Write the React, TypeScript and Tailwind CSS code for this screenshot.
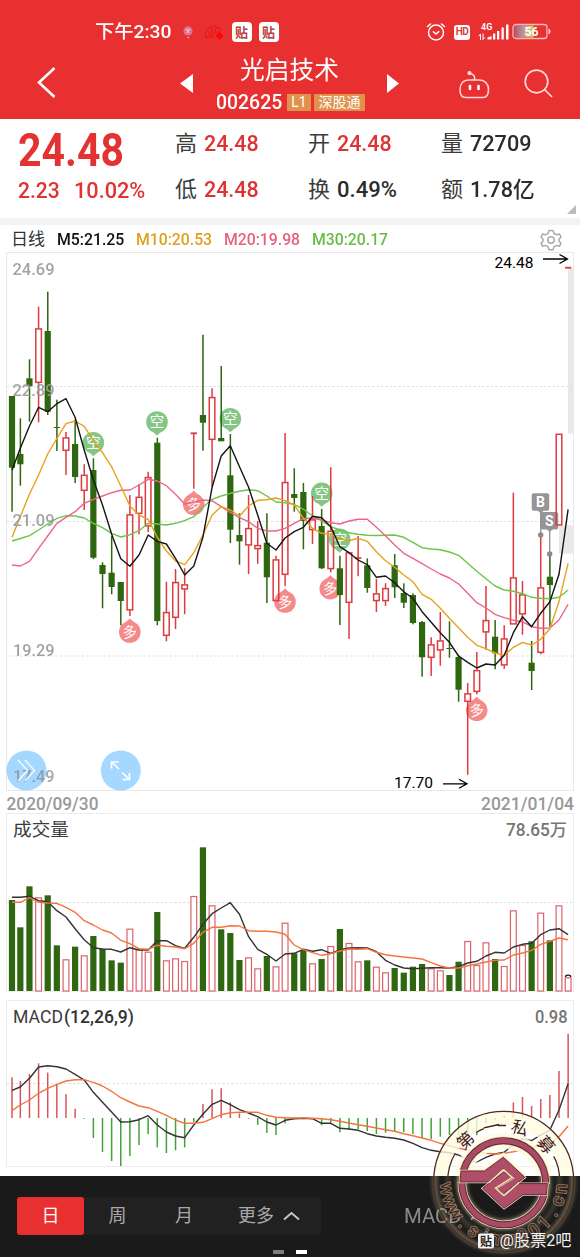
import React, { useLayoutEffect, useRef, useState } from 'react';

const CJK = "font-['Roboto','Noto_Sans_CJK_SC',sans-serif]";
const RED = '#dd3b3f';
const GREEN = '#2f6610';

/* one row per day: up/down, body top, body bottom, high, low */
type Candle = [string, number, number, number, number];

const candles: Candle[] = [
  ['d', 396, 467.7, 396, 511.7], ['d', 454, 464.3, 418.3, 485.7], ['d', 378.3, 386.3, 359.3, 421.7],
  ['u', 328.3, 382.7, 306.7, 422.3], ['d', 331, 411.7, 291.7, 415], ['d', 427, 428, 399.7, 451],
  ['u', 437.3, 450.7, 432, 475], ['d', 444, 477, 419.3, 483], ['u', 474.7, 490.7, 464.3, 510],
  ['d', 470, 557.7, 458.3, 559], ['d', 565, 574, 562.3, 608.3], ['d', 572.7, 587, 536, 594.3],
  ['d', 582, 601, 582, 625.3], ['u', 514.3, 610.3, 495, 616], ['u', 496.7, 513.7, 484, 534.3],
  ['u', 477, 526.3, 471.7, 532], ['d', 442.7, 621, 437.7, 625.3], ['u', 612, 635.7, 581.7, 641.3],
  ['u', 582, 617.7, 569, 629], ['u', 584.3, 589.3, 568.3, 614.3], ['u', 433.3, 433.3, 433.3, 488.7],
  ['d', 415, 422.7, 334.7, 450.7], ['u', 397, 439.7, 388.3, 487], ['d', 438, 441.3, 366, 441],
  ['d', 475.3, 529.7, 434, 543], ['d', 535, 541.3, 513.3, 564.7], ['u', 528, 545.3, 495, 574],
  ['u', 545, 549, 521, 563.7], ['d', 542.7, 577.3, 513.3, 603], ['u', 559.3, 601, 555.7, 601],
  ['u', 482, 574.7, 433, 586], ['d', 494, 498, 468.3, 511.7], ['d', 492, 521, 483, 549.3],
  ['u', 519.3, 530, 496, 544], ['d', 526, 568.3, 509, 569], ['u', 530.7, 569, 467.3, 572.3],
  ['d', 568.3, 595, 555.7, 625], ['u', 552.3, 602.7, 552.3, 639], ['u', 558, 558, 536, 576.3],
  ['d', 565.3, 588, 558.3, 592.7], ['u', 593.3, 601, 578.7, 612], ['u', 588, 601, 583.3, 606],
  ['d', 565.3, 587.3, 554, 598], ['d', 593, 602.7, 583.3, 608], ['d', 595, 623, 593.3, 624.3],
  ['d', 622, 657.3, 621, 676.7], ['u', 644.3, 657.7, 637.3, 676], ['u', 640.3, 650.3, 612, 665.7],
  ['d', 648, 649, 621.3, 657.7], ['d', 657, 689.7, 655, 701.7], ['u', 693.3, 701.7, 683, 774.7],
  ['u', 670, 691.7, 652, 694.3], ['u', 620, 632.3, 586, 650], ['d', 636.7, 653.3, 620, 669.3],
  ['u', 638.3, 665.3, 625.3, 668.7], ['u', 577.3, 624.3, 492.7, 624.3], ['u', 594.3, 614.3, 581, 634.7],
  ['d', 662.7, 671, 641, 690], ['u', 587.3, 652.7, 534.7, 654.3], ['d', 576.7, 585, 554, 626.7],
  ['u', 433.7, 525.3, 433.7, 525.3], ['u', 267.7, 267.7, 267.7, 267.7],
];

const ma5 = [470.3, 448.3, 426, 407.3, 411.7, 403.7, 398.7, 417.3, 450, 480, 505, 534, 558.7, 566.3, 555, 535, 541.3, 544, 558.3, 575, 566, 537.3, 487.3, 456, 445.7, 466.7, 487.3, 515, 543.3, 550, 538, 531.7, 527.3, 516.3, 517.7, 526.7, 546.7, 552.7, 560, 564.7, 577.3, 576, 582.7, 591.7, 598.3, 611.7, 622.3, 632.7, 642.3, 656, 662.3, 668, 664, 665, 655.3, 632.7, 616.7, 626.7, 613.3, 601.7, 574.3, 509.3];
const ma10 = [537.3, 516.7, 494, 475, 454, 438.3, 423.7, 421, 426.3, 440.7, 452.7, 466.7, 486, 506, 515, 519.3, 537.3, 551, 561, 564.7, 552.7, 535, 515, 506.7, 510, 516, 506, 500.3, 499.7, 498, 500.7, 505, 518.3, 528.3, 533.3, 534.3, 538.7, 540.7, 538.3, 541.3, 551.7, 560.7, 567.3, 575, 581.7, 594.3, 599.3, 608.3, 618.3, 627.7, 637.3, 645.3, 648.7, 653, 655.3, 647.3, 642.3, 645, 639.3, 628.7, 601.7, 563.3];
const ma20 = [565, 566, 561.3, 548.3, 536, 523.3, 517.3, 511.7, 503.3, 499.3, 496, 492.7, 490.3, 490, 485, 479.3, 481, 485.7, 494.3, 504, 502.3, 500, 500.7, 506.7, 512.3, 517.7, 521.7, 528.3, 531, 531, 528.3, 523.3, 518.7, 518, 520, 522.7, 524, 521, 519.3, 519.3, 527.3, 535.7, 545, 553.3, 558.3, 563.7, 569, 574, 578, 584, 593.3, 602.7, 608, 614.3, 617.7, 620.3, 621.7, 626.7, 628.3, 628, 620, 604.3];
const ma30 = [541, 538.5, 535.7, 530, 524, 518.3, 515.7, 516, 518, 523.3, 527.7, 533.3, 537, 534.7, 530.7, 523.3, 524, 525, 523.3, 520.7, 516.7, 507.3, 499.3, 496, 493.3, 491.3, 489.7, 490.7, 496, 502, 502.7, 504.3, 509.3, 515.7, 520.7, 526.7, 530, 532.7, 534.3, 535.3, 535.5, 535.3, 535, 537.3, 542.3, 547.7, 549, 549.7, 552, 555.3, 563.3, 571.3, 578.7, 586, 590, 591.3, 593.7, 597.3, 598.3, 598.7, 597.3, 590];

/* lower panels are kept in thirds of a pixel, counted from y = 815 */
const vol = [255, 337, 214, 247, 241, 391, 433, 395, 421, 363, 402, 436, 443, 341, 403, 410, 291, 436, 430, 438, 243, 97, 271, 343, 354, 435, 427, 460, 423, 454, 323, 415, 405, 445, 432, 393, 342, 384, 439, 436, 455, 472, 459, 473, 455, 447, 460, 466, 480, 440, 378, 450, 382, 432, 453, 286, 390, 379, 293, 376, 271, 487];
const vol5 = [247, 247, 244, 257, 260, 287, 306, 341, 374, 398, 402, 403, 411, 398, 405, 405, 377, 377, 392, 400, 367, 328, 296, 279, 263, 298, 365, 403, 418, 438, 417, 415, 403, 409, 404, 415, 405, 399, 398, 399, 410, 436, 450, 459, 461, 460, 458, 458, 459, 455, 444, 439, 423, 412, 414, 396, 388, 385, 359, 345, 341, 359];
const vol10 = [262, 262, 248, 262, 264, 265, 277, 292, 317, 330, 345, 354, 376, 386, 401, 403, 391, 394, 396, 401, 385, 352, 337, 337, 332, 333, 347, 349, 349, 351, 358, 390, 404, 413, 421, 416, 408, 402, 403, 401, 412, 419, 423, 426, 429, 432, 443, 453, 459, 459, 452, 447, 441, 436, 435, 420, 414, 406, 388, 379, 369, 374];
const hist = [787, 798, 777, 745, 773, 807, 838, 881, 911, 969, 1011, 1038, 1053, 1023, 990, 957, 997, 1014, 1006, 997, 921, 867, 823, 820, 862, 895, 911, 930, 954, 960, 925, 912, 911, 909, 931, 923, 952, 945, 942, 948, 957, 953, 948, 951, 957, 970, 972, 965, 960, 960, 965, 961, 924, 915, 900, 862, 846, 873, 852, 840, 768, 656];
const dif = [826, 816, 790, 756, 752, 755, 762, 778, 795, 832, 862, 891, 921, 920, 914, 902, 930, 951, 963, 968, 930, 898, 868, 856, 869, 884, 894, 905, 921, 930, 916, 911, 910, 911, 925, 925, 940, 942, 946, 956, 963, 967, 970, 975, 985, 998, 1006, 1010, 1013, 1020, 1034, 1041, 1027, 1017, 1012, 988, 971, 977, 960, 945, 885, 806];
const dea = [887, 870, 855, 835, 820, 808, 798, 794, 794, 802, 813, 829, 848, 861, 873, 878, 889, 901, 915, 925, 925, 922, 911, 899, 893, 892, 892, 892, 901, 907, 908, 909, 909, 910, 911, 914, 919, 924, 929, 934, 939, 944, 949, 956, 962, 969, 976, 985, 992, 999, 1006, 1011, 1015, 1017, 1015, 1010, 1004, 998, 990, 985, 965, 933];

const px = (i: number) => (i === 0 ? 12 : 11.2 + 9.13 * i);
const sub = (v: number) => 815 + v / 3;
const pts = (ys: number[]) => ys.map((y, i) => `${px(i).toFixed(1)},${y.toFixed(1)}`).join(' ');

/* squeezes a label into a fixed width, the digits are a narrow DIN cut */
const Fit: React.FC<{ w: number; className?: string; children: React.ReactNode }> = ({ w, className = '', children }) => {
  const ref = useRef<HTMLSpanElement>(null);
  const [k, setK] = useState(1);
  useLayoutEffect(() => { if (ref.current) setK(w / ref.current.offsetWidth); }, [w]);
  return (
    <span className={`inline-block ${className}`} style={{ width: w }}>
      <span ref={ref} className="inline-block origin-left whitespace-nowrap" style={{ transform: `scaleX(${k})` }}>{children}</span>
    </span>
  );
};

const Line: React.FC<{ ys: number[]; color: string }> = ({ ys, color }) => (
  <polyline points={pts(ys)} fill="none" stroke={color} strokeWidth="1.4" strokeLinejoin="round" />
);

const Txt: React.FC<{ x: number; y: number; w: number; size: number; fill?: string; weight?: number; children: string }> =
  ({ x, y, w, size, fill = '#999', weight = 500, children }) => (
    <text x={x} y={y} textLength={w} lengthAdjust="spacingAndGlyphs" fontSize={size} fill={fill} fontWeight={weight}>{children}</text>
  );

const Tie: React.FC = () => (
  <span className="flex size-5 items-center justify-center rounded-[4px] bg-white text-[13px] font-bold leading-none text-[#b9403c]">贴</span>
);

const Header: React.FC = () => (
  <header className="flex h-[119px] flex-col bg-[#e83030] text-white">
    <div className="flex h-[44px] items-center pl-[95px] pr-[26px] pt-5">
      <Fit w={76} className="text-[18px] font-medium leading-6">下午2:30</Fit>
      <svg className="ml-[11px]" width="12" height="14" viewBox="0 0 12 14">
        <circle cx="6" cy="6" r="4.7" fill="#dc6a8c" />
        <path d="M3 5h6M4 3.5l4 5M8 3.5l-4 5M6 2.5v6" stroke="#f7c3d3" strokeWidth=".7" />
        <circle cx="6.3" cy="12.6" r=".7" fill="#fff" />
      </svg>
      <svg className="ml-[11px]" width="19" height="17" viewBox="0 0 19 17">
        <path d="M1 13C-.5 10 .5 7 2.500 6.500 2.500 4 5 2.500 6.500 3.500c1.500-2 4-1.500 5 0 2-.8 4 .8 4 2.500M1 13h4.500l4-1.500M5.500 12.500L3 7M7.500 11L6.500 4.500M9.500 10l1.500-6M11 9.500l4-3.500" fill="none" stroke="#f20d12" strokeWidth="1" />
        <path d="M14.500 7c0 2-3.400 3-3.400 5.300 0 1.600 1.900 1.900 2.800 1.200l-.7 1.700h3l-.8-1.700c1 .7 2.700.4 2.700-1.200 0-2.300-3.600-3.300-3.600-5.300z" fill="#fb0508" />
      </svg>
      <span className="ml-[7.500px] flex gap-[7px]"><Tie /><Tie /></span>
      <div className="ml-auto flex items-center">
        <svg width="20" height="20" viewBox="0 0 20 20" fill="none" stroke="#fff" strokeWidth="1.5" strokeLinecap="round">
          <circle cx="10" cy="10.500" r="7.500" />
          <path d="M1.500 4.500l3-2.500M18.500 4.500l-3-2.500M7.300 9.800l2.600 2.200 2.800-2.400" />
        </svg>
        <span className="ml-[8px] flex h-[15px] w-[16px] items-center justify-center rounded-[3px] bg-white text-[10px] font-bold leading-none tracking-[-0.5px] text-[#d8403e]">HD</span>
        <svg className="ml-[8px]" width="34" height="20" viewBox="0 0 34 20">
          <text x="3" y="8" fontSize="9" fontWeight="600" fill="#fff">4G</text>
          <path d="M2.500 18v-6l-1.500 2M5 11.500v6l1.500-2" fill="none" stroke="#fff" />
          <path d="M9.500 17.500v-2l4-1.500v3.500zM15 17.500v-6h2.300v6zM19 17.500v-8.500h2.300v8.500zM23.500 17.500v-12h2.300v12zM28 17.500V2.500h2.500v15z" fill="#fff" />
        </svg>
        <svg width="42" height="18" viewBox="0 0 42 18">
          <defs>
            <linearGradient id="charge">
              <stop offset="0" stopColor="#a55a72" /><stop offset=".6" stopColor="#c9a79c" /><stop offset="1" stopColor="#c6d94a" />
            </linearGradient>
          </defs>
          <rect x="2.500" y="2.500" width="19" height="12" fill="url(#charge)" />
          <rect x="1" y="1.500" width="34" height="14" rx="3" fill="none" stroke="#f6b9b6" strokeWidth="1.300" />
          <path d="M37 6q2.500 2.500 0 5z" fill="#f6c9c6" stroke="#f6c9c6" />
          <text x="12.500" y="13" fontSize="12.500" fontWeight="700" fill="#fff" textLength="14" lengthAdjust="spacingAndGlyphs">56</text>
        </svg>
      </div>
    </div>
    <div className="flex h-[75px]">
      <svg className="ml-[36px] mt-[22px]" width="20" height="32" viewBox="0 0 20 32" fill="none" stroke="#fff" strokeWidth="2.600">
        <path d="M18.500 2L3 16.500 18.500 31" />
      </svg>
      <svg className="ml-[124px] mt-[30px]" width="13" height="19" viewBox="0 0 13 19"><path d="M13 0v19L0 9.500z" fill="#fff" /></svg>
      <div className="ml-[22px] flex w-[150px] flex-col">
        <Fit w={99} className="ml-[25px] mt-[9px] text-[25px] leading-[36px]">光启技术</Fit>
        <div className="mt-[4px] flex h-[18px] items-center">
          <Fit w={66} className="ml-px text-[20px] font-medium leading-none">002625</Fit>
          <span className="ml-[5px] w-[24px] bg-[#e0914c] text-center text-[14px] leading-[17px]">L1</span>
          <span className="ml-[3px] w-[51px] bg-[#e0914c] text-center text-[14px] leading-[17px]">深股通</span>
        </div>
      </div>
      <svg className="ml-[22px] mt-[30px]" width="12" height="19" viewBox="0 0 12 19"><path d="M0 0v19L12 9.500z" fill="#fff" /></svg>
      <svg className="ml-[59px] mt-[26px]" width="32" height="30" viewBox="0 0 32 30" fill="none" stroke="#ffd9d7" strokeWidth="1.600">
        <path d="M11 10h10c6 0 9.500 4 9.500 9.500 0 6-2 8-5.500 8H7.500c-3.500 0-5.500-2-5.500-8C2 14 5 10 11 10zM16.500 10c1-4-1-6-5-6.500" />
        <circle cx="11.500" cy="3.200" r="1.300" fill="#fff" />
        <path d="M12 16v3M20.500 16v3" stroke="#fff" strokeWidth="2.600" strokeLinecap="round" />
      </svg>
      <svg className="ml-[34px] mt-[25px]" width="30" height="30" viewBox="0 0 30 30" fill="none" stroke="#ffd9d7" strokeWidth="1.700">
        <circle cx="12.500" cy="12.500" r="11.300" /><path d="M20.500 20.500l7.500 7.500" />
      </svg>
    </div>
  </header>
);

const Cell: React.FC<{ label: string; value: string; w: number; gap?: string; red?: boolean }> = ({ label, value, w, gap = 'ml-[7px]', red }) => (
  <div className="flex h-[46px] items-center text-[22px]">
    <span className="text-[#3c3c3c]">{label}</span>
    <Fit w={w} className={`${gap} font-medium ${red ? 'text-[#dc3434]' : 'text-[#2b2b2b]'}`}>{value}</Fit>
  </div>
);

const Quote: React.FC = () => (
  <section className="relative flex h-[99px] bg-white leading-none">
    <div className="w-[175px] pl-[18px] text-[#e23232]">
      <Fit w={106} className="mt-[10px] text-[46px] font-bold leading-[42px]">24.48</Fit>
      <div className="mt-[9px] flex text-[22px] font-medium">
        <Fit w={42}>2.23</Fit>
        <Fit w={71} className="ml-[14px]">10.02%</Fit>
      </div>
    </div>
    <div className="w-[133px] pt-[2px]">
      <Cell label="高" value="24.48" w={54.5} red />
      <Cell label="低" value="24.48" w={54.5} red />
    </div>
    <div className="w-[133px] pt-[2px]">
      <Cell label="开" value="24.48" w={54.5} red />
      <Cell label="换" value="0.49%" w={60} />
    </div>
    <div className="pt-[2px]">
      <Cell label="量" value="72709" w={62} />
      <Cell label="额" value="1.78亿" w={65} />
    </div>
    <svg className="absolute bottom-[4px] right-[4px]" width="9" height="9" viewBox="0 0 9 9"><path d="M9 0v9H0z" fill="#bcbcbc" /></svg>
  </section>
);

const Legend: React.FC = () => (
  <div className="flex h-[27px] items-center pl-[11px] pt-[2px] text-[17px] leading-none">
    <Fit w={34} className="text-[#333]">日线</Fit>
    <Fit w={67} className="ml-[12px] font-medium text-[#111]">M5:21.25</Fit>
    <Fit w={76} className="ml-[12px] font-medium text-[#dfa01f]">M10:20.53</Fit>
    <Fit w={76} className="ml-[12px] font-medium text-[#e9607f]">M20:19.98</Fit>
    <Fit w={76} className="ml-[12px] font-medium text-[#68bd45]">M30:20.17</Fit>
    <svg className="ml-[152px]" width="22" height="22" viewBox="0 0 22 22" fill="none" stroke="#a9a9a9" strokeWidth="1.500" strokeLinejoin="round">
      <path d="M9 1.500h4l1 3 2.500 1.300 3-.8 1.500 3-2 2.200v1.800l2 2.200-1.500 3-3-.8L14 17.700l-1 3H9l-1-3-2.500-1.300-3 .8L1 14.200 3 12v-1.800L1 8l1.500-3 3 .8L8 4.500z" />
      <circle cx="11" cy="11" r="3.200" />
    </svg>
  </div>
);

const Pin: React.FC<{ x: number; y: number; short?: boolean }> = ({ x, y, short }) => (
  <g>
    <circle cx={x} cy={y} r="10.800" fill={short ? '#84c683' : '#f58a8a'} />
    <path d={short ? `M${x - 5} ${y + 9}L${x} ${y + 13.5}L${x + 5} ${y + 9}z` : `M${x - 5} ${y - 9}L${x} ${y - 13.5}L${x + 5} ${y - 9}z`} fill={short ? '#84c683' : '#f58a8a'} />
    <text x={x} y={y + 5.2} fontSize="14.500" textAnchor="middle" fill="#fff" transform={short ? undefined : `rotate(-8 ${x} ${y})`}>{short ? '空' : '多'}</text>
  </g>
);

const Grid: React.FC<{ ys: number[] }> = ({ ys }) => (
  <>{ys.map(y => <path key={y} d={`M7 ${y}H574`} stroke="#dcdcdc" strokeDasharray="2.200 2.200" />)}</>
);

const KChart: React.FC = () => (
  <svg className="block" width="580" height="561" viewBox="0 252 580 561">
    <rect x="6.500" y="252.500" width="567" height="538" fill="none" stroke="#e9e9e9" />
    <rect x="568" y="268" width="5.500" height="165.700" fill="#e8e8e8" />
    <rect x="559" y="525.300" width="14.500" height="28.400" fill="#e8e8e8" />
    <Grid ys={[386.5, 521.5, 656]} />
    <Pin short x={93.3} y={442.7} /><Pin short x={157} y={422} /><Pin short x={230.3} y={418.7} />
    <Pin short x={321.7} y={493.3} /><Pin short x={339.7} y={539.3} />
    <Pin x={129.8} y={632} /><Pin x={193.7} y={504.3} /><Pin x={285} y={602} />
    <Pin x={330.3} y={588.7} /><Pin x={476.7} y={710.3} />

    {/* trade flags */}
    <path d="M540.700 510v25M549.700 528v26" stroke="#8f8f8f" strokeWidth="1.300" />
    <rect x="540.700" y="512" width="17.500" height="17.500" rx="2" fill="#959595" />
    <rect x="531.700" y="493.300" width="17.500" height="17.500" rx="2" fill="#959595" />
    <path d="M537.500 510.500h6.400l-3.200 3zM546.500 529h6.400l-3.200 3z" fill="#959595" />
    <g fontSize="14" fontWeight="700" fill="#fff" textAnchor="middle">
      <text x="540.500" y="507">B</text><text x="549.300" y="526">S</text>
    </g>

    {candles.map(([t, a, b, hi, lo], i) => {
      const x = px(i);
      if (t === 'd') return (
        <g key={i} fill={GREEN}>
          <rect x={x - 0.7} y={hi} width="1.500" height={lo - hi} />
          <rect x={x - 3.1} y={a} width="6.200" height={b - a} />
        </g>
      );
      return (
        <g key={i} fill="none" stroke={RED} strokeWidth="1.500">
          <path d={`M${x} ${hi}V${a}M${x} ${b}V${lo}`} />
          {a === b ? <path d={`M${x - 3.200} ${a}H${x + 3.200}`} strokeWidth="1.800" />
            : <rect x={x - 2.8} y={a + 0.6} width="5.600" height={b - a - 1} />}
        </g>
      );
    })}
    <circle cx="540.700" cy="535" r="2.700" fill="#8a8a8a" /><circle cx="549.700" cy="554" r="2.700" fill="#8a8a8a" />

    <Line ys={ma30} color="#6cc44b" />
    <Line ys={ma20} color="#ec6685" />
    <Line ys={ma10} color="#e5a31c" />
    <Line ys={ma5} color="#151515" />

    {/* scroll and expand buttons */}
    <circle cx="26.500" cy="770.500" r="20" fill="#69beff" opacity=".6" />
    <circle cx="120.800" cy="770.500" r="20" fill="#69beff" opacity=".6" />

    <g opacity=".9">
      <Txt x={12.5} y={274.5} w={42} size={17}>24.69</Txt>
      <Txt x={12.5} y={395.5} w={42} size={17}>22.89</Txt>
      <Txt x={12.5} y={526} w={42} size={17}>21.09</Txt>
      <Txt x={13} y={656} w={41.5} size={17}>19.29</Txt>
    </g>
    <g opacity=".8"><Txt x={13} y={782} w={41.5} size={17} fill="#8a9297">17.49</Txt></g>
    <path d="M18 760l9.500 10.500L18 781M25 760l9.500 10.500L25 781" fill="none" stroke="#fff" strokeWidth="1.200" />
    <path d="M111.500 768.500v-6.500h7M112 762.500l7 6.500M129.500 773v6.500h-7M129 779l-7-6.500" fill="none" stroke="#fff" strokeWidth="1.700" />

    <Txt x={6.5} y={810.3} w={92} size={17.5}>2020/09/30</Txt>
    <Txt x={481} y={810.3} w={93} size={17.5}>2021/01/04</Txt>
    <Txt x={494.5} y={267.8} w={39} size={14.5} weight={400} fill="#000">24.48</Txt>
    <Txt x={394} y={787.8} w={39} size={14.5} weight={400} fill="#000">17.70</Txt>
    <path d="M543 259h24M559.500 254.500l8 4.500-8 4.500M443 783.800h24M459 779.300l8 4.500-8 4.500" fill="none" stroke="#000" strokeWidth="1.300" />
  </svg>
);

const Volume: React.FC = () => (
  <svg className="block" width="580" height="187" viewBox="0 813 580 187">
    <rect x="6.500" y="813.500" width="567" height="178" fill="none" stroke="#ececec" />
    <Grid ys={[902.5]} />
    <Txt x={13} y={836} w={56} size={18.5} weight={400} fill="#3c3c3c">成交量</Txt>
    <Txt x={506} y={836} w={61} size={17.5} fill="#757575">78.65万</Txt>
    {vol.map((v, i) => candles[i][0] === 'd'
      ? <rect key={i} x={px(i) - 3.1} y={sub(v)} width="6.200" height={991 - sub(v)} fill={GREEN} />
      : <rect key={i} x={px(i) - 2.9} y={sub(v) + 0.5} width="5.800" height={990.5 - sub(v)} fill="#fff" stroke="#d9636a" strokeWidth="1.200" />)}
    <path d="M565.500 977q0-1.800 2.600-1.800t2.600 1.800" fill="none" stroke="#111" strokeWidth="1.300" />
    <Line ys={vol5.map(sub)} color="#333" />
    <Line ys={vol10.map(sub)} color="#f3743f" />
  </svg>
);

const Macd: React.FC = () => (
  <svg className="block" width="580" height="176" viewBox="0 1000 580 176">
    <rect x="6.500" y="1000.500" width="567" height="166" fill="none" stroke="#ececec" />
    <Grid ys={[1083.5]} />
    <Txt x={13} y={1022.5} w={50} size={17.5} weight={400} fill="#3c3c3c">MACD</Txt>
    <Txt x={64} y={1022.5} w={70} size={17.5} fill="#333">(12,26,9)</Txt>
    <Txt x={535} y={1023} w={32.5} size={17.5} fill="#757575">0.98</Txt>
    {hist.map((v, i) => v !== 909 && (
      <path key={i} d={`M${px(i)} 1118V${sub(v)}`} stroke={v < 909 ? '#d8545a' : '#3fa535'} strokeWidth="1.500" />
    ))}
    <Line ys={dif.map(sub)} color="#333" />
    <Line ys={dea.map(sub)} color="#f3743f" />
  </svg>
);

const Footer: React.FC = () => (
  <footer className="flex h-[81px] flex-col bg-[#1a1a1a] text-[18px] leading-none text-[#a9a9a9]">
    <div className="mt-[21px] flex h-[38px] items-center pl-[17px]">
      <div className="flex h-full w-[304px] items-center rounded-[3px] bg-[#212121]">
        <span className="flex h-full w-[67px] items-center justify-center rounded-[3px] bg-[#e83030] text-white">日</span>
        <span className="w-[67px] text-center">周</span>
        <span className="w-[66px] text-center">月</span>
        <span className="ml-[21px]">更多</span>
        <svg className="ml-[9px]" width="17" height="10" viewBox="0 0 17 10" fill="none" stroke="#c9c9c9" strokeWidth="1.800"><path d="M1 8.500L8.500 2 16 8.500" /></svg>
      </div>
      <Fit w={58} className="ml-[83px] text-[20px] text-[#8b8b8b]">MACD</Fit>
      <svg className="ml-[8px]" width="17" height="10" viewBox="0 0 17 10" fill="none" stroke="#999" strokeWidth="1.800"><path d="M1 8.500L8.500 2 16 8.500" /></svg>
    </div>
    <div className="ml-[273px] mt-[15px] flex gap-[12px]">
      <i className="h-[4px] w-[11px] bg-[#7d7d7d]" /><i className="h-[4px] w-[11px] bg-white" />
    </div>
  </footer>
);

const ring = [
  { c: '第', a: -43 }, { c: '一', a: -12.5 }, { c: '私', a: 17 }, { c: '募', a: 49 },
];
const site = 'www.simu001.cn'.split('');
const hook = 'M461 1171h23.500l18.800-13.700 21.500 20-21.300 16.500-8.500-6.300 17-10.500-8.800-8.300-14.500 13.300H460z';

/* round brand seal laid over the lower right corner */
const Seal: React.FC = () => (
  <svg className="pointer-events-none absolute left-[424px] top-[1102px]" width="156" height="155" viewBox="424 1102 156 155">
    <defs>
      <clipPath id="above"><rect x="424" y="1102" width="156" height="74" /></clipPath>
      <clipPath id="below"><rect x="424" y="1176" width="156" height="81" /></clipPath>
      <filter id="glow" x="-20%" y="-20%" width="140%" height="140%"><feGaussianBlur stdDeviation="2" /></filter>
    </defs>
    <g clipPath="url(#above)" fill="none">
      <circle cx="503.700" cy="1181.300" r="63" stroke="#fffbe2" strokeWidth="15" opacity=".8" />
      <circle cx="503.700" cy="1182.800" r="42" stroke="#fffbe2" strokeWidth="16" opacity=".85" />
      <path d={hook} fill="#fffbe2" stroke="#fffbe2" strokeWidth="8" opacity=".9" />
    </g>
    <g clipPath="url(#below)" fill="none" stroke="#cdbf96" filter="url(#glow)">
      <circle cx="503.700" cy="1181.300" r="69" strokeWidth="4" opacity=".55" />
      <circle cx="503.700" cy="1181.300" r="56" strokeWidth="3" opacity=".3" />
      <circle cx="503.700" cy="1182.800" r="42" strokeWidth="9" opacity=".8" />
    </g>
    <g fill="none" stroke="#4b2b22" strokeWidth="1.300">
      <circle cx="503.700" cy="1181.300" r="70" />
      <path d="M447.700 1181.300q0-15 7.500-28M559.700 1181.300q0-15-6-25M476 1132.500q4-2.300 8-3.800M498 1125.500h8" />
    </g>
    {ring.map(({ c, a }) => (
      <text key={c} x="503.700" y="1131.500" fontSize="17" textAnchor="middle" fill="#43221a" transform={`rotate(${a} 503.700 1181.300)`}>{c}</text>
    ))}
    {site.map((c, i) => (
      <text key={i} x="503.700" y="1245" fontSize="18" textAnchor="middle" fill="#42271f" stroke="#8f7960" strokeWidth="1.800" paintOrder="stroke" transform={`rotate(${83 - i * 12.8} 503.700 1182)`}>{c}</text>
    ))}
    {[['#e9deb4', 8.5], ['#5a2236', 7], ['#aa4a65', 5.2]].map(([c, w]) => (
      <path key={c} d="M463.300 1171a42 42 0 0 1 82.300 13M544.200 1194.500a42 42 0 0 1-82.300-13" fill="none" stroke={c as string} strokeWidth={w} />
    ))}
    {['', 'rotate(180 503.700 1182.800)'].map(t => (
      <g key={t} transform={t || undefined}>
        <path d={hook} fill="#b04e68" stroke="#e9deb4" strokeWidth="2.400" />
        <path d={hook} fill="#b04e68" stroke="#6a2a40" strokeWidth="1" />
      </g>
    ))}
    <path d="M503.500 1169.500l8.500 8-16.500 10.500 8.500 8" fill="none" stroke="#e9deb4" strokeWidth="1.500" />
    <path d="M503.500 1169.500l-15 13.500M504 1196l15-13.500" fill="none" stroke="#e9deb4" strokeWidth="1.500" />
    <rect x="478" y="1233.500" width="16" height="15" rx="2" fill="#f4f4f4" />
    <text x="486" y="1245.500" fontSize="12" fontWeight="700" textAnchor="middle" fill="#2a2523">贴</text>
    <text x="499.500" y="1245.500" fontSize="16" fill="#f0f0f0" textLength="72" lengthAdjust="spacingAndGlyphs">@股票2吧</text>
  </svg>
);

export default function App() {
  return (
    <div className={`relative h-[1257px] w-[580px] overflow-hidden bg-white ${CJK}`}>
      <Header />
      <Quote />
      <div className="h-[7px] bg-[#f3f3f3]" />
      <Legend />
      <KChart />
      <Volume />
      <Macd />
      <Footer />
      <Seal />
    </div>
  );
}
